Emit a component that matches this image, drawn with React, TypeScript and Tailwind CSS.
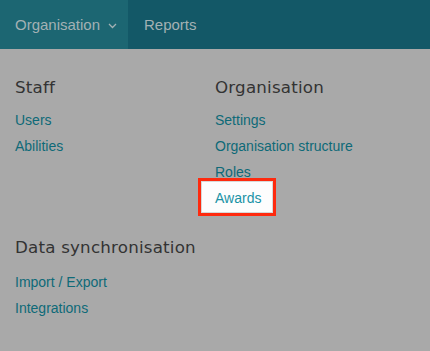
import React from "react";

const linkCls = "block h-[26px] leading-[26px] text-[14px] text-[#0e6a78]";
const headCls = "h-[24px] leading-[24px] text-[16.7px] text-[#333333] tracking-[0.2px]";

function Chevron() {
  return (
    <svg width="9" height="6" viewBox="0 0 9 6" className="ml-[8px] mt-[1px]">
      <polyline points="1,1 4.5,4.5 8,1" fill="none" stroke="#a3b1b4" strokeWidth="1.3" />
    </svg>
  );
}

export default function App() {
  return (
    <div className="w-[430px] h-[351px] bg-[#a9a9a9] overflow-hidden" style={{ fontFamily: '"Liberation Sans", Arial, sans-serif' }}>
      <div className="flex h-[49px] bg-[#135867] text-[15px] text-[#a3b1b4]">
        <div className="flex items-center w-[128px] pl-[15px] pt-[2px] bg-[#1c6672]">
          <span>Organisation</span>
          <Chevron />
        </div>
        <div className="flex items-center pl-[16px] pt-[2px]">Reports</div>
      </div>
      <div className="grid grid-cols-[200px_200px] pl-[15px] pt-[26px]">
        <div>
          <div className={headCls} style={{ fontFamily: '"DejaVu Sans", sans-serif' }}>Staff</div>
          <div className="mt-[8px]">
            <a className={linkCls}>Users</a>
            <a className={linkCls}>Abilities</a>
          </div>
        </div>
        <div>
          <div className={headCls} style={{ fontFamily: '"DejaVu Sans", sans-serif' }}>Organisation</div>
          <div className="mt-[8px]">
            <a className={linkCls}>Settings</a>
            <a className={linkCls}>Organisation structure</a>
            <a className={linkCls}>Roles</a>
            <div className="relative h-[26px]">
              <span className="absolute left-[-17px] top-[-7px] w-[78px] h-[38px] border-[3px] border-[#fe2a0e] bg-[#fdfdfd] shadow-[inset_0_0_0_1px_#d8d8d8]" />
              <a className="relative block h-[26px] leading-[26px] text-[14px] text-[#1a93a6]">Awards</a>
            </div>
          </div>
        </div>
        <div className="mt-[24px]">
          <div className={headCls + " whitespace-nowrap"} style={{ fontFamily: '"DejaVu Sans", sans-serif' }}>Data synchronisation</div>
          <div className="mt-[10px]">
            <a className={linkCls}>Import / Export</a>
            <a className={linkCls}>Integrations</a>
          </div>
        </div>
      </div>
    </div>
  );
}
